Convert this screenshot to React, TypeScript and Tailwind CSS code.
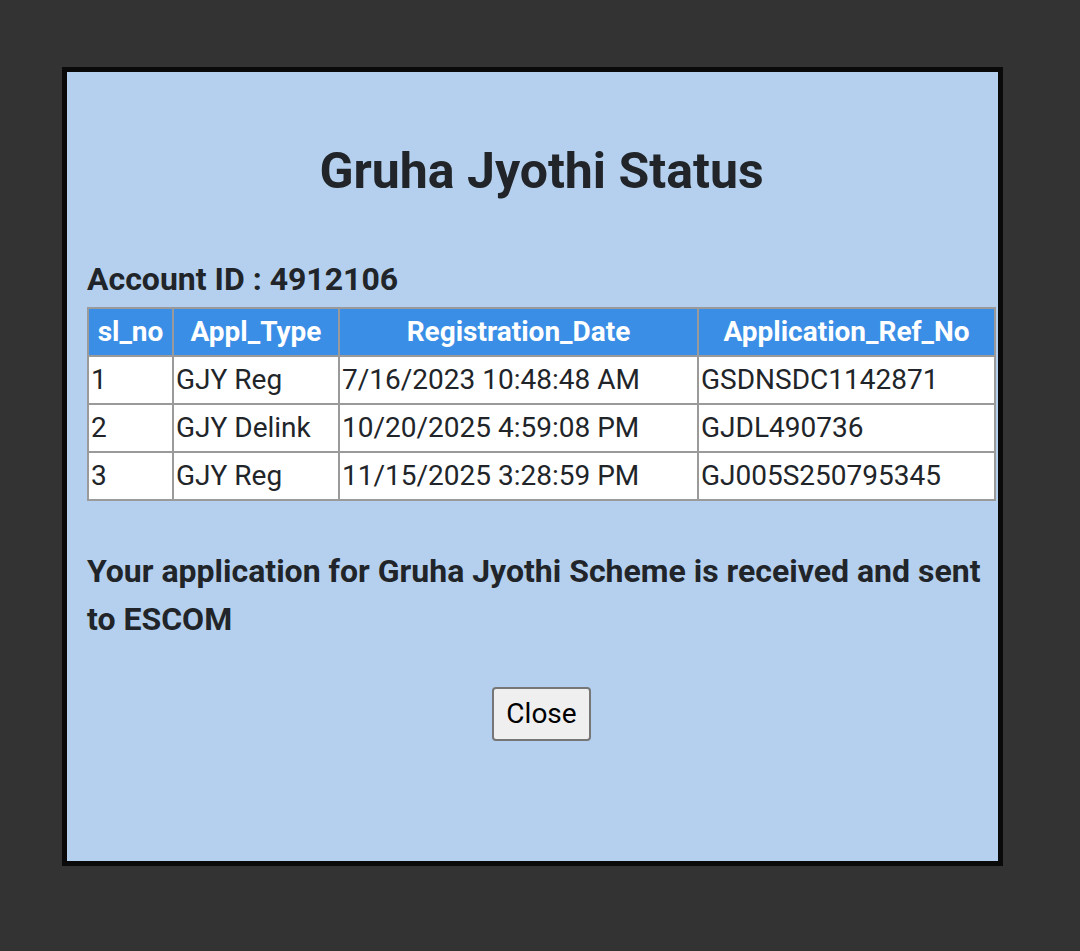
import React from 'react';

const rows = [
  { sl: '1', type: 'GJY Reg', date: '7/16/2023 10:48:48 AM', ref: 'GSDNSDC1142871' },
  { sl: '2', type: 'GJY Delink', date: '10/20/2025 4:59:08 PM', ref: 'GJDL490736' },
  { sl: '3', type: 'GJY Reg', date: '11/15/2025 3:28:59 PM', ref: 'GJ005S250795345' },
];

export default function App() {
  return (
    <div className="w-[1080px] h-[951px] bg-[#333333] pt-[67px] pl-[62px] font-['Roboto',sans-serif] text-[#212529]">
      {/* Modal */}
      <div className="w-[941px] h-[799px] border-[5px] border-[#0a0a0a] bg-[#b4d0ee] pl-[20px]">
        <div className="w-[909px] flex flex-col">
          <h1 className="mt-[69px] text-center text-[50px] leading-[60px] font-bold">Gruha Jyothi Status</h1>

          <div className="mt-[60px] text-[32px] leading-[36px] font-bold">Account ID : 4912106</div>

          <table className="mt-[10px] w-[909px] border-collapse bg-white text-[28px] leading-[32px]">
            <thead>
              <tr className="bg-[#3a8ee6] text-white">
                <th className="w-[85px] h-[48px] border-2 border-[#9a9a9a] font-bold">sl_no</th>
                <th className="w-[166px] h-[48px] border-2 border-[#9a9a9a] font-bold">Appl_Type</th>
                <th className="w-[359px] h-[48px] border-2 border-[#9a9a9a] font-bold">Registration_Date</th>
                <th className="h-[48px] border-2 border-[#9a9a9a] font-bold">Application_Ref_No</th>
              </tr>
            </thead>
            <tbody>
              {rows.map((r) => (
                <tr key={r.sl}>
                  <td className="h-[48px] border-2 border-[#9a9a9a] pl-[2px]">{r.sl}</td>
                  <td className="h-[48px] border-2 border-[#9a9a9a] pl-[2px]">{r.type}</td>
                  <td className="h-[48px] border-2 border-[#9a9a9a] pl-[2px]">{r.date}</td>
                  <td className="h-[48px] border-2 border-[#9a9a9a] pl-[2px]">{r.ref}</td>
                </tr>
              ))}
            </tbody>
          </table>

          <p className="mt-[46px] text-[32px] leading-[48px] font-bold">
            Your application for Gruha Jyothi Scheme is received and sent to ESCOM
          </p>

          <div className="mt-[44px] flex justify-center">
            <button className="w-[99px] h-[54px] bg-[#efefef] border-2 border-[#767676] rounded-[4px] text-[28px] text-black">
              Close
            </button>
          </div>
        </div>
      </div>
    </div>
  );
}
